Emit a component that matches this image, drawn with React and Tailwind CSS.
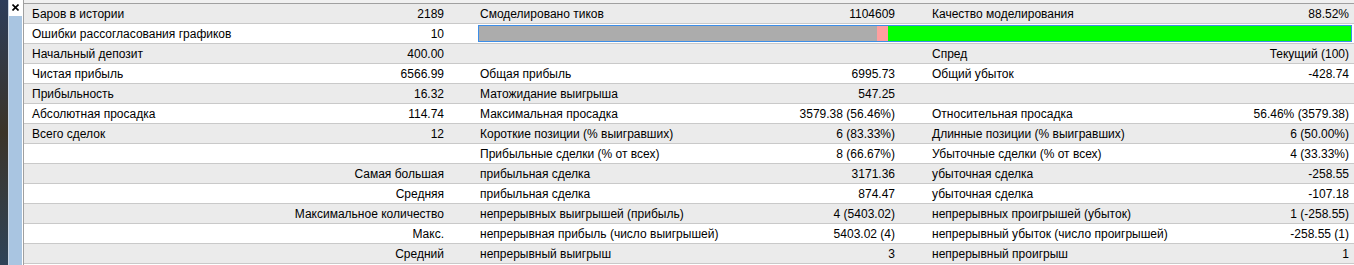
import React from "react";

const rows = [
  { a: ["Баров в истории", "2189"], b: ["Смоделировано тиков", "1104609"], c: ["Качество моделирования", "88.52%"] },
  { a: ["Ошибки рассогласования графиков", "10"], bar: true },
  { a: ["Начальный депозит", "400.00"], b: ["", ""], c: ["Спред", "Текущий (100)"] },
  { a: ["Чистая прибыль", "6566.99"], b: ["Общая прибыль", "6995.73"], c: ["Общий убыток", "-428.74"] },
  { a: ["Прибыльность", "16.32"], b: ["Матожидание выигрыша", "547.25"], c: ["", ""] },
  { a: ["Абсолютная просадка", "114.74"], b: ["Максимальная просадка", "3579.38 (56.46%)"], c: ["Относительная просадка", "56.46% (3579.38)"] },
  { a: ["Всего сделок", "12"], b: ["Короткие позиции (% выигравших)", "6 (83.33%)"], c: ["Длинные позиции (% выигравших)", "6 (50.00%)"] },
  { a: ["", ""], b: ["Прибыльные сделки (% от всех)", "8 (66.67%)"], c: ["Убыточные сделки (% от всех)", "4 (33.33%)"] },
  { a: ["", "Самая большая"], b: ["прибыльная сделка", "3171.36"], c: ["убыточная сделка", "-258.55"] },
  { a: ["", "Средняя"], b: ["прибыльная сделка", "874.47"], c: ["убыточная сделка", "-107.18"] },
  { a: ["", "Максимальное количество"], b: ["непрерывных выигрышей (прибыль)", "4 (5403.02)"], c: ["непрерывных проигрышей (убыток)", "1 (-258.55)"] },
  { a: ["", "Макс."], b: ["непрерывная прибыль (число выигрышей)", "5403.02 (4)"], c: ["непрерывный убыток (число проигрышей)", "-258.55 (1)"] },
  { a: ["", "Средний"], b: ["непрерывный выигрыш", "3"], c: ["непрерывный проигрыш", "1"] },
];

function Row({ r, i }) {
  const bg = i % 2 === 0 ? "bg-[#ebebeb]" : "bg-white";
  return (
    <div className={`flex h-[20px] border-b border-[#c9c9c9] ${bg} items-center`}>
      <div className="w-[448px] shrink-0 flex justify-between pl-2 pr-[28px] pt-px whitespace-nowrap">
        <span>{r.a[0]}</span>
        <span>{r.a[1]}</span>
      </div>
      {r.bar ? (
        <div className="flex-1 h-full pl-[6px] pr-[2px] py-px">
          <div className="h-full flex border border-[#3d8ee8]">
            <div className="w-[398px] bg-[#acacac]" />
            <div className="w-[11px] bg-[#ff9f9f]" />
            <div className="flex-1 bg-[#00ff00]" />
          </div>
        </div>
      ) : (
        <>
          <div className="w-[452px] shrink-0 flex justify-between pl-2 pr-[29px] pt-px whitespace-nowrap">
            <span>{r.b[0]}</span>
            <span>{r.b[1]}</span>
          </div>
          <div className="flex-1 flex justify-between pl-2 pr-[5px] pt-px whitespace-nowrap">
            <span>{r.c[0]}</span>
            <span>{r.c[1]}</span>
          </div>
        </>
      )}
    </div>
  );
}

export default function App() {
  return (
    <div className="flex w-[1354px] h-[265px] overflow-hidden bg-white text-black text-[12px] leading-[18px] font-['Liberation_Sans',Arial,sans-serif]">
      <div className="w-[8px] shrink-0 bg-gradient-to-b from-[#2c3d5a] via-[#3b3428] to-[#2e4358]" />
      <div className="w-px shrink-0 bg-[#c9d6e4]" />
      <div className="w-[13px] shrink-0 flex flex-col bg-[#a9c5e1]">
        <div className="h-[16px] bg-white flex items-start justify-center pt-[4px]">
          <svg width="7" height="7" viewBox="0 0 7 7">
            <path d="M0.5 0.5 L6.5 6.5 M6.5 0.5 L0.5 6.5" stroke="#000" strokeWidth="1.6" />
          </svg>
        </div>
      </div>
      <div className="w-px shrink-0 bg-white" />
      <div className="flex-1 flex flex-col border-l border-[#a0a0a0] min-w-0">
        <div className="h-[4px] shrink-0 bg-[#f0f0f0] border-b border-[#a0a0a0]" />
        {rows.map((r, i) => (
          <Row key={i} r={r} i={i} />
        ))}
      </div>
    </div>
  );
}
